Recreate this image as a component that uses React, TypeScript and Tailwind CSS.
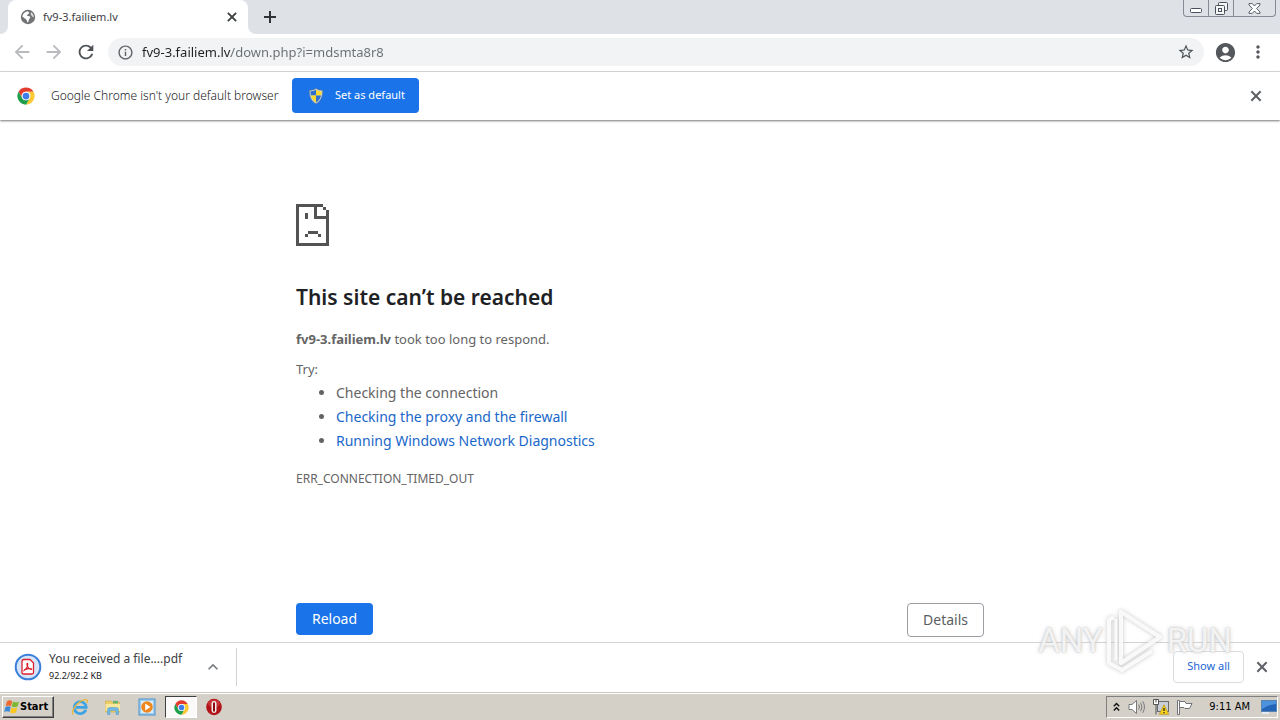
import React from "react";
import {
  MdAccountCircle,
  MdArrowBack,
  MdArrowForward,
  MdInfoOutline,
  MdKeyboardArrowUp,
  MdMoreVert,
  MdRefresh,
  MdStarBorder,
} from "react-icons/md";

function CloseIcon({ className }: { className: string }) {
  return (
    <svg viewBox="0 0 24 24" className={className} fill="none" stroke="currentColor" strokeWidth="2.8" aria-hidden="true">
      <path d="M5.8 5.8 L18.2 18.2 M18.2 5.8 L5.8 18.2" />
    </svg>
  );
}

function PlusIcon() {
  return (
    <svg viewBox="0 0 20 20" className="h-5 w-5" fill="none" stroke="currentColor" strokeWidth="2" shapeRendering="crispEdges" aria-hidden="true">
      <path d="M10 4 V16 M4 10 H16" />
    </svg>
  );
}

function ChromeLogo({ className }: { className: string }) {
  return (
    <svg viewBox="0 0 48 48" className={className} aria-hidden="true">
      <circle cx="24" cy="24" r="23" fill="#fff" />
      <path d="M4.1 12.5 A23 23 0 0 1 43.9 12.5 H24 A11.5 11.5 0 0 0 14 29.75 Z" fill="#e33b2e" />
      <path d="M43.9 12.5 A23 23 0 0 1 24 47 L34 29.75 A11.5 11.5 0 0 0 24 12.5 Z" fill="#fcc934" />
      <path d="M24 47 A23 23 0 0 1 4.1 12.5 L14 29.75 A11.5 11.5 0 0 0 34 29.75 Z" fill="#1e9e4a" />
      <circle cx="24" cy="24" r="11.5" fill="#fff" />
      <circle cx="24" cy="24" r="9" fill="#3f7de8" />
    </svg>
  );
}

function GlobeIcon() {
  return (
    <svg viewBox="0 0 16 16" className="h-4 w-4" aria-hidden="true">
      <circle cx="8" cy="8" r="7.2" fill="#717375" />
      <path d="M2.3 7.6 C2.6 5 4.8 2.6 8.3 2.3 C7.8 3.2 9.6 3.3 9 4.6 C8.6 5.6 7.2 5.2 7 6.4 C7 7.2 9.8 6.6 10.2 8 C10.6 9 9.4 9.4 9 10.2 C8.6 11 9 12.6 7.6 13.6 C6.8 13.2 7.4 11.6 6.6 10.9 C5.4 10 3.6 8.6 2.3 7.6Z" fill="#fff" />
      <path d="M11 3.2 C12.6 4.2 13.7 5.8 13.8 8 C13.2 8.6 12 7.6 11.4 6.6 C10.8 5.5 10.4 4.2 11 3.2Z" fill="#fff" opacity=".75" />
    </svg>
  );
}

function ShieldIcon() {
  return (
    <svg viewBox="0 0 16 16" className="h-4 w-4" aria-hidden="true">
      <path d="M8 .4 C10 1.8 12 2.2 14.6 2.2 C14.8 8.5 13 13 8 15.7 C3 13 1.2 8.5 1.4 2.2 C4 2.2 6 1.8 8 .4Z" fill="#c9d2d8" stroke="#60707c" strokeWidth=".5" />
      <path d="M8 1.7 C6 2.9 4.4 3.3 2.5 3.3 C2.5 5 2.7 6.3 3 7.6 H8Z" fill="#2f6fd0" />
      <path d="M8 1.7 C10 2.9 11.6 3.3 13.5 3.3 C13.5 5 13.3 6.3 13 7.6 H8Z" fill="#fbd92e" />
      <path d="M3 7.6 H8 V14.5 C5.2 12.9 3.6 10.5 3 7.6Z" fill="#fbd92e" />
      <path d="M13 7.6 H8 V14.5 C10.8 12.9 12.4 10.5 13 7.6Z" fill="#2f6fd0" />
    </svg>
  );
}

function SadPage() {
  return (
    <svg viewBox="0 0 33 42" className="h-[42px] w-[33px]" fill="#535353" shapeRendering="crispEdges" aria-hidden="true">
      <rect x="0" y="0" width="3" height="42" />
      <rect x="0" y="0" width="27" height="3" />
      <rect x="27" y="3" width="3" height="3" />
      <rect x="30" y="6" width="3" height="36" />
      <rect x="0" y="39" width="33" height="3" />
      <rect x="18" y="0" width="3" height="15" />
      <rect x="18" y="12" width="15" height="3" />
      <rect x="9" y="9" width="3" height="6" />
      <rect x="12" y="27" width="10" height="3" />
      <rect x="9" y="30" width="3" height="3" />
      <rect x="22" y="30" width="3" height="3" />
    </svg>
  );
}

function TabStrip() {
  return (
    <header className="flex h-[34px] shrink-0 bg-[#dee1e6]">
      <div className="flex h-full w-2 items-end">
        <div className="h-2 w-2 bg-white">
          <div className="h-2 w-2 rounded-br-lg bg-[#dee1e6]" />
        </div>
      </div>
      <div className="flex w-60 items-center rounded-t-lg bg-white pr-2 pl-3">
        <GlobeIcon />
        <span className="ml-[7px] flex-1 text-[11px] text-[#3c4043]">fv9-3.failiem.lv</span>
        <button aria-label="Close tab" className="text-[#3c4043]">
          <CloseIcon className="h-4 w-4" />
        </button>
      </div>
      <div className="flex h-full w-2 items-end">
        <div className="h-2 w-2 bg-white">
          <div className="h-2 w-2 rounded-bl-lg bg-[#dee1e6]" />
        </div>
      </div>
      <button aria-label="New tab" className="ml-1 self-center text-[#303338]">
        <PlusIcon />
      </button>
      <div className="mr-1 ml-auto flex h-[17px] divide-x divide-[#858a94] rounded-b border border-t-0 border-[#858a94] text-[#4a4f5a]">
        <button aria-label="Minimize" className="flex w-[25px] items-end justify-center pb-[3px]">
          <svg viewBox="0 0 12 5" className="h-[5px] w-3"><rect x=".5" y=".5" width="11" height="4" rx="1" fill="#fff" stroke="currentColor" /></svg>
        </button>
        <button aria-label="Restore" className="flex w-[25px] items-center justify-center">
          <svg viewBox="0 0 13 13" className="h-[13px] w-[13px]" fill="#f4f5f7" stroke="currentColor">
            <rect x="3.5" y=".5" width="9" height="8" rx="1" />
            <rect x=".5" y="3.5" width="9" height="9" rx="1" />
            <rect x="3.5" y="6.5" width="3" height="3" />
          </svg>
        </button>
        <button aria-label="Close window" className="flex w-[41px] items-center justify-center">
          <svg viewBox="0 0 13 11" className="h-[11px] w-[13px]" fill="#fff" stroke="currentColor" strokeWidth=".9">
            <path d="M1 .6 H4.3 L6.5 3 L8.7 .6 H12 V2 L8.6 5.5 L12 9 V10.4 H8.7 L6.5 8 L4.3 10.4 H1 V9 L4.4 5.5 L1 2Z" />
          </svg>
        </button>
      </div>
    </header>
  );
}

function Toolbar() {
  return (
    <nav className="flex h-[38px] shrink-0 items-center border-b border-[#d9dadc] bg-white pr-3 pb-px pl-[11px]">
      <button aria-label="Back" className="text-[#b8babd]"><MdArrowBack className="h-[22px] w-[22px]" /></button>
      <button aria-label="Forward" className="ml-2.5 text-[#b8babd]"><MdArrowForward className="h-[22px] w-[22px]" /></button>
      <button aria-label="Reload page" className="ml-2.5 text-[#4e5256]"><MdRefresh className="h-[22px] w-[22px]" /></button>
      <div className="ml-[11px] flex h-7 flex-1 items-center rounded-full bg-[#f1f3f4] px-[9px]">
        <MdInfoOutline className="h-[17px] w-[17px] text-[#5f6368]" />
        <input
          aria-label="Address"
          defaultValue="fv9-3.failiem.lv/down.php?i=mdsmta8r8"
          className="ml-2 h-7 min-w-0 flex-1 bg-[linear-gradient(90deg,#202124_89px,#6a6e73_89px)] bg-clip-text text-[13px] text-transparent caret-black outline-none"
        />
        <button aria-label="Bookmark this page" className="text-[#4e5256]"><MdStarBorder className="h-[18px] w-[18px]" /></button>
      </div>
      <button aria-label="Profile" className="ml-2.5 text-[#54575c]"><MdAccountCircle className="h-[23px] w-[23px]" /></button>
      <button aria-label="Menu" className="ml-[11px] text-[#54575c]"><MdMoreVert className="h-5 w-5" /></button>
    </nav>
  );
}

function InfoBar() {
  return (
    <section className="z-10 flex h-12 shrink-0 items-center bg-white pr-[15px] pb-px pl-[17px] shadow-[0_1px_2px_#777]">
      <ChromeLogo className="h-[18px] w-[18px]" />
      <p className="ml-4 w-[229px] text-[12px] font-light whitespace-nowrap text-[#18191b]">Google Chrome isn't your default browser</p>
      <button className="ml-3 flex h-[35px] w-[127px] items-center rounded bg-[#1a73e8] pl-4 text-[11px] text-white">
        <ShieldIcon />
        <span className="ml-[11px]">Set as default</span>
      </button>
      <button aria-label="Dismiss" className="ml-auto text-[#5f6368]"><CloseIcon className="h-[18px] w-[18px]" /></button>
    </section>
  );
}

function ErrorPage() {
  return (
    <main className="flex flex-1 flex-col bg-white">
      <div className="mx-auto w-full max-w-[688px] pt-[84px] text-[#646464]">
        <SadPage />
        <h1 className="mt-[35px] text-[21px] leading-8 font-semibold text-[#202124]">This site can’t be reached</h1>
        <p className="mt-4 text-[13px] leading-5"><b>fv9-3.failiem.lv</b> took too long to respond.</p>
        <p className="mt-2.5 text-[13px] leading-5">Try:</p>
        <ul className="mt-0.5 list-disc pl-10 text-[14px] leading-6">
          <li>Checking the connection</li>
          <li><a href="#proxy" className="text-[#1967c9]">Checking the proxy and the firewall</a></li>
          <li><a href="#diagnostics" className="text-[#1967c9]">Running Windows Network Diagnostics</a></li>
        </ul>
        <p className="mt-4 text-[12px] leading-5">ERR_CONNECTION_TIMED_OUT</p>
        <div className="mt-[114px] flex justify-between">
          <button className="h-8 w-[77px] rounded bg-[#1a73e8] text-sm text-white">Reload</button>
          <button className="h-[34px] w-[77px] rounded border border-[#9b9ea3] text-sm text-[#5a5d61]">Details</button>
        </div>
      </div>
    </main>
  );
}

function PdfBadge() {
  return (
    <svg viewBox="0 0 28 28" className="h-7 w-7" aria-hidden="true">
      <circle cx="14" cy="14" r="12.3" fill="#d6e4fa" stroke="#3b7fd9" strokeWidth="2" />
      <path d="M9.5 6.5 H16 L19.5 10 V19.5 Q19.5 21 18 21 H9.5 Q8 21 8 19.5 V8 Q8 6.5 9.5 6.5Z" fill="#fff" stroke="#e0202c" strokeWidth="1.3" />
      <path d="M10 17.6 C12 16.6 14 13.5 13.7 10.8 C13.5 9.7 12.7 10.4 13 11.6 C13.5 14 15.5 16.3 17.4 16.4 C18.4 16 16.6 15.3 14.2 15.6 C12 15.9 10.4 16.6 10 17.6Z" fill="none" stroke="#d8141f" strokeWidth="1.1" />
    </svg>
  );
}

function DownloadBar() {
  return (
    <section className="flex h-[50px] shrink-0 items-center border-t border-[#d3d4d6] bg-white pr-[9px] pb-0.5 pl-3.5">
      <PdfBadge />
      <div className="ml-[7px] w-[152px] text-[#3c4043]">
        <p className="text-[12px] leading-[18px]">You received a file....pdf</p>
        <p className="text-[9px] leading-4 text-[#202124]">92.2/92.2 KB</p>
      </div>
      <button aria-label="Download options" className="text-[#75787d]"><MdKeyboardArrowUp className="h-5 w-6" /></button>
      <div className="ml-[11px] h-[38px] w-px bg-[#d0d2d5]" />
      <button className="ml-auto h-8 w-[71px] rounded border border-[#dadce0] text-[11px] text-[#1967d2]">Show all</button>
      <button aria-label="Close downloads" className="ml-[9px] text-[#5f6368]"><CloseIcon className="h-[18px] w-[18px]" /></button>
    </section>
  );
}

function WindowsFlag() {
  return (
    <svg viewBox="0 0 16 16" className="h-4 w-4" aria-hidden="true">
      <path d="M3 2.2 C5 1 6.6 1.2 8.2 2.2 L6.9 7.2 C5.2 6.2 3.6 6.2 1.7 7.2Z" fill="#f0682b" />
      <path d="M9 2.6 C11 3.6 12.8 3.6 15 2.4 L13.6 7.6 C11.6 8.6 9.8 8.6 7.7 7.6Z" fill="#7db832" />
      <path d="M1.5 8 C3.3 7 5 7.1 6.7 8.1 L5.4 13 C3.7 12 2 12 .2 13Z" fill="#3b8ad8" />
      <path d="M7.4 8.5 C9.4 9.5 11.2 9.4 13.3 8.4 L12 13.4 C10 14.4 8 14.4 6.1 13.4Z" fill="#f9c71f" />
    </svg>
  );
}

function InternetExplorer() {
  return (
    <svg viewBox="0 0 18 18" className="h-[18px] w-[18px]" fill="none" aria-hidden="true">
      <path d="M14.8 11.8 A6 6 0 1 1 15.2 9.4 H5" stroke="#3fa3e3" strokeWidth="2.7" />
      <path d="M2.4 16.4 C-1 15 5 5 11.5 2.4 C15 .9 17.4 1.6 16 5" stroke="#e8b83c" strokeWidth="1.3" />
    </svg>
  );
}

function FolderIcon() {
  return (
    <svg viewBox="0 0 18 18" className="h-[18px] w-[18px]" aria-hidden="true">
      <path d="M1.5 3 H7 L8 4.3 H15.5 V14 H1.5Z" fill="#edcf6a" stroke="#cda83d" strokeWidth=".6" />
      <path d="M9 2.8 H14 V5.5 H9Z" fill="#68b46e" />
      <path d="M1.5 6 H16 V13 H1.5Z" fill="#f8e79d" />
      <path d="M3.5 16.5 V11.5 Q3.5 9.5 6 9.5 H12 Q14.5 9.5 14.5 11.5 V16.5 H12 V12.5 H6 V16.5Z" fill="#73b9e6" stroke="#4c94c5" strokeWidth=".5" />
    </svg>
  );
}

function MediaPlayer() {
  return (
    <svg viewBox="0 0 18 18" className="h-[18px] w-[18px]" aria-hidden="true">
      <rect x="1" y="1" width="16" height="16" fill="#9fcdf0" stroke="#4c91cb" />
      <rect x="3" y="3" width="12" height="12" fill="#d9effc" />
      <circle cx="9" cy="9" r="5.8" fill="#ef861c" />
      <path d="M7.2 5.5 L12.5 9 L7.2 12.5Z" fill="#fff" />
    </svg>
  );
}

function OperaIcon() {
  return (
    <svg viewBox="0 0 18 18" className="h-[18px] w-[18px]" aria-hidden="true">
      <ellipse cx="9" cy="9" rx="7.8" ry="8.2" fill="#b01217" />
      <ellipse cx="9" cy="5.5" rx="6" ry="4" fill="#d84a4a" opacity=".6" />
      <rect x="6.5" y="3" width="5" height="12" rx="2.4" fill="#f4f0f0" />
      <rect x="8" y="4.2" width="2" height="9.6" rx="1" fill="#8c0c10" />
    </svg>
  );
}

function Tray() {
  return (
    <div className="mr-0.5 ml-auto flex h-[22px] items-center border border-t-[#808080] border-r-white border-b-white border-l-[#808080] pl-1.5">
      <button aria-label="Show hidden icons">
        <svg viewBox="0 0 7 10" className="h-2.5 w-[7px]" fill="none" stroke="#111" strokeWidth="1.4"><path d="M.8 4.3 L3.5 1.5 L6.2 4.3 M.8 8.5 L3.5 5.7 L6.2 8.5" /></svg>
      </button>
      <svg viewBox="0 0 18 16" className="ml-2 h-4 w-[18px]" fill="none" stroke="#77797c" aria-hidden="true">
        <path d="M1 5.5 H4 L8.5 1.5 V14.5 L4 10.5 H1Z" fill="#fff" />
        <path d="M10.7 5.5 Q12.2 8 10.7 10.5 M12.7 3.8 Q15.2 8 12.7 12.2 M14.7 2.2 Q18.2 8 14.7 13.8" />
      </svg>
      <svg viewBox="0 0 18 16" className="ml-1.5 h-4 w-[18px]" fill="none" aria-hidden="true">
        <rect x="5.5" y="2.5" width="11" height="10" fill="#c8ced6" stroke="#686a6e" />
        <path d="M1.5 .5 H6.5 V5.5 H1.5Z" fill="#fff" stroke="#555" />
        <path d="M4 .5 V3.5 M4 5.5 V15.5" stroke="#555" />
        <path d="M12 5.8 L16.7 15.3 H7.3Z" fill="#fbd51e" stroke="#b88d08" strokeWidth=".7" />
        <path d="M12 9 V12 M12 13 V14.2" stroke="#222" strokeWidth="1.3" />
      </svg>
      <svg viewBox="0 0 17 16" className="ml-1.5 h-4 w-[17px]" fill="#fff" stroke="#707276" aria-hidden="true">
        <path d="M1.5 1.5 H3.5 V15.5 H1.5Z" />
        <path d="M3.5 2.5 H9 L10 4.5 H16 L13.5 9.5 H9 L8 8.5 H3.5Z" />
      </svg>
      <time className="ml-4 text-[11px] text-black">9:11 AM</time>
      <svg viewBox="0 0 16 14" className="ml-[11px] h-3.5 w-4" aria-hidden="true">
        <rect x=".5" y=".5" width="15" height="11" fill="#2364b8" stroke="#5c83ad" />
        <path d="M1 1 H15 V4 Q8 4.5 1 9Z" fill="#4b91dd" />
        <rect x="1" y="12" width="7" height="2" fill="#e3ebf3" />
      </svg>
    </div>
  );
}

function Taskbar() {
  return (
    <footer className="flex h-7 shrink-0 items-center border-t border-[#c9c6bf] bg-[#d4d0c8] pt-px pl-0.5 font-['DejaVu_Sans_Condensed','DejaVu_Sans',sans-serif] shadow-[inset_0_1px_#fff]">
      <button className="flex h-[22px] w-[52px] items-center border border-t-white border-r-[#404040] border-b-[#404040] border-l-white pl-px text-[11px] font-bold text-black shadow-[inset_-1px_-1px_#808080]">
        <WindowsFlag />
        <span>Start</span>
      </button>
      <button aria-label="Internet Explorer" className="ml-[17px]"><InternetExplorer /></button>
      <button aria-label="File explorer" className="ml-[15px]"><FolderIcon /></button>
      <button aria-label="Media player" className="ml-4"><MediaPlayer /></button>
      <button aria-label="Chrome" className="ml-[9px] flex h-[22px] w-8 items-center justify-center border border-t-[#404040] border-r-white border-b-white border-l-[#404040] bg-[#fbfaf9]">
        <ChromeLogo className="h-[15px] w-[15px]" />
      </button>
      <button aria-label="Opera" className="ml-2"><OperaIcon /></button>
      <Tray />
    </footer>
  );
}

function Watermark() {
  return (
    <div className="pointer-events-none absolute right-12 bottom-[47px] z-20 flex h-[66px] items-center font-['Roboto',sans-serif] text-[33px] leading-none text-white/80 [text-shadow:0_0_2px_#bbb,0_0_5px_#ccc]">
      <span>ANY</span>
      <svg viewBox="0 0 60 66" className="mx-0.5 h-[66px] w-[60px] drop-shadow-[0_0_2px_#bbb]" fill="none" stroke="#fff" strokeOpacity=".85" strokeWidth="4" strokeLinejoin="round" aria-hidden="true">
        <path d="M16 5 L55 30 L16 56Z" />
        <path d="M9 10 L4 13 V56 L17 63 L47 44" />
        <path d="M11 12 V53" strokeWidth="3" />
      </svg>
      <span>RUN</span>
    </div>
  );
}

export default function App() {
  return (
    <div className="relative flex min-h-screen flex-col overflow-hidden bg-white font-['Noto_Sans','Open_Sans',sans-serif]">
      <TabStrip />
      <Toolbar />
      <InfoBar />
      <ErrorPage />
      <DownloadBar />
      <Taskbar />
      <Watermark />
    </div>
  );
}
